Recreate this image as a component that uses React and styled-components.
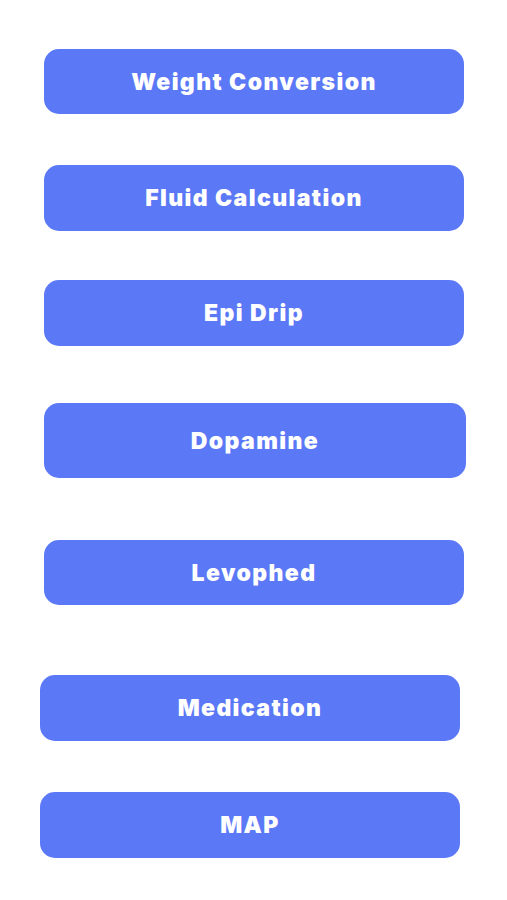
import styled, { createGlobalStyle } from "styled-components";

const Global = createGlobalStyle`
  body {
    margin: 0;
    background: #ffffff;
    font-family: Inter, "Liberation Sans", sans-serif;
  }
`;

const Lista = styled.div`
  display: flex;
  flex-direction: column;
  align-items: flex-start;
  padding-top: 49px;
`;

/* Botão azul arredondado do menu */
const Botao = styled.button`
  margin-top: ${(p) => p.$top}px;
  margin-left: ${(p) => p.$left}px;
  width: ${(p) => p.$width}px;
  height: ${(p) => p.$height}px;
  padding: 0;
  border: none;
  border-radius: 15px;
  background: #5b78f6;
  color: #ffffff;
  font-family: Inter, "Liberation Sans", sans-serif;
  font-size: 23px;
  font-weight: 900;
  letter-spacing: 1.4px;
  display: flex;
  align-items: center;
  justify-content: center;
  cursor: pointer;
`;

const itens = [
  { nome: "Weight Conversion", top: 0, left: 44, width: 420, height: 65 },
  { nome: "Fluid Calculation", top: 51, left: 44, width: 420, height: 66 },
  { nome: "Epi Drip", top: 49, left: 44, width: 420, height: 66 },
  { nome: "Dopamine", top: 57, left: 44, width: 422, height: 75 },
  { nome: "Levophed", top: 62, left: 44, width: 420, height: 65 },
  { nome: "Medication", top: 70, left: 40, width: 420, height: 66 },
  { nome: "MAP", top: 51, left: 40, width: 420, height: 66 },
];

export default function App() {
  return (
    <>
      <Global />
      <Lista>
        {itens.map((item) => (
          <Botao
            key={item.nome}
            $top={item.top}
            $left={item.left}
            $width={item.width}
            $height={item.height}
          >
            {item.nome}
          </Botao>
        ))}
      </Lista>
    </>
  );
}
